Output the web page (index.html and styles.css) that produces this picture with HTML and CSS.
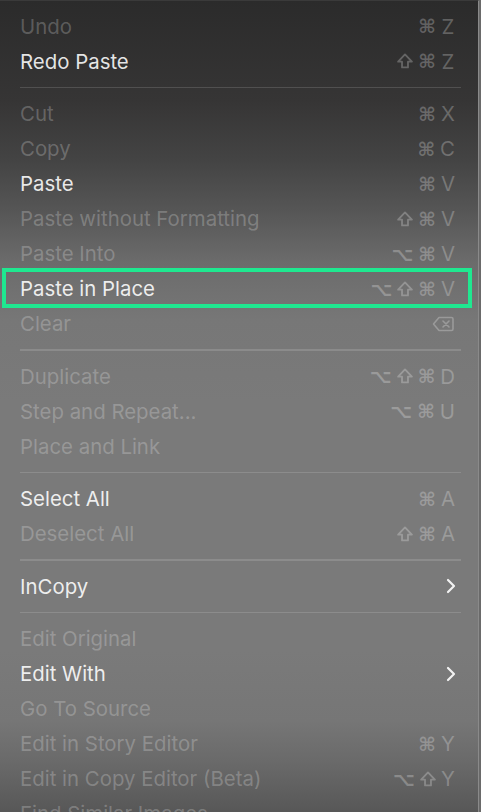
FILE: index.html
```html
<!DOCTYPE html>
<html>
<head>
<meta charset="utf-8">
<link rel="stylesheet" href="styles.css">
</head>
<body>
<div class="menu">
  <div class="item off"><span class="label">Undo</span><span class="keys"><i>⌘</i><b>Z</b></span></div>
  <div class="item"><span class="label">Redo Paste</span><span class="keys"><svg class="shift" viewBox="0 0 14 14"><path d="M7 1.2 L13 7.6 H9.6 V12.6 H4.4 V7.6 H1 Z" fill="none" stroke="currentColor" stroke-width="1.6" stroke-linejoin="round"/></svg><i>⌘</i><b>Z</b></span></div>
  <div class="sep"></div>
  <div class="item off"><span class="label">Cut</span><span class="keys"><i>⌘</i><b>X</b></span></div>
  <div class="item off"><span class="label">Copy</span><span class="keys"><i>⌘</i><b>C</b></span></div>
  <div class="item"><span class="label">Paste</span><span class="keys"><i>⌘</i><b>V</b></span></div>
  <div class="item off"><span class="label">Paste without Formatting</span><span class="keys"><svg class="shift" viewBox="0 0 14 14"><path d="M7 1.2 L13 7.6 H9.6 V12.6 H4.4 V7.6 H1 Z" fill="none" stroke="currentColor" stroke-width="1.6" stroke-linejoin="round"/></svg><i>⌘</i><b>V</b></span></div>
  <div class="item off"><span class="label">Paste Into</span><span class="keys"><i>⌥</i><i>⌘</i><b>V</b></span></div>
  <div class="item hl"><span class="label">Paste in Place</span><span class="keys"><i>⌥</i><svg class="shift" viewBox="0 0 14 14"><path d="M7 1.2 L13 7.6 H9.6 V12.6 H4.4 V7.6 H1 Z" fill="none" stroke="currentColor" stroke-width="1.6" stroke-linejoin="round"/></svg><i>⌘</i><b>V</b></span></div>
  <div class="item off"><span class="label">Clear</span>
    <svg class="del" width="22" height="16" viewBox="0 0 22 16"><path d="M7 1.5 H19.5 A1.5 1.5 0 0 1 21 3 V13 A1.5 1.5 0 0 1 19.5 14.5 H7 L1.5 8 Z" fill="none" stroke="currentColor" stroke-width="1.6" stroke-linejoin="round"/><path d="M11 5 L17 11 M17 5 L11 11" stroke="currentColor" stroke-width="1.6" stroke-linecap="round"/></svg>
  </div>
  <div class="sep"></div>
  <div class="item off"><span class="label">Duplicate</span><span class="keys"><i>⌥</i><svg class="shift" viewBox="0 0 14 14"><path d="M7 1.2 L13 7.6 H9.6 V12.6 H4.4 V7.6 H1 Z" fill="none" stroke="currentColor" stroke-width="1.6" stroke-linejoin="round"/></svg><i>⌘</i><b>D</b></span></div>
  <div class="item off"><span class="label">Step and Repeat...</span><span class="keys"><i>⌥</i><i>⌘</i><b>U</b></span></div>
  <div class="item off"><span class="label">Place and Link</span></div>
  <div class="sep"></div>
  <div class="item"><span class="label">Select All</span><span class="keys"><i>⌘</i><b>A</b></span></div>
  <div class="item off"><span class="label">Deselect All</span><span class="keys"><svg class="shift" viewBox="0 0 14 14"><path d="M7 1.2 L13 7.6 H9.6 V12.6 H4.4 V7.6 H1 Z" fill="none" stroke="currentColor" stroke-width="1.6" stroke-linejoin="round"/></svg><i>⌘</i><b>A</b></span></div>
  <div class="sep"></div>
  <div class="item"><span class="label">InCopy</span>
    <svg class="chev" width="10" height="16" viewBox="0 0 10 16"><path d="M2 2 L8 8 L2 14" fill="none" stroke="currentColor" stroke-width="2.2" stroke-linecap="round" stroke-linejoin="round"/></svg>
  </div>
  <div class="sep"></div>
  <div class="item off"><span class="label">Edit Original</span></div>
  <div class="item"><span class="label">Edit With</span>
    <svg class="chev" width="10" height="16" viewBox="0 0 10 16"><path d="M2 2 L8 8 L2 14" fill="none" stroke="currentColor" stroke-width="2.2" stroke-linecap="round" stroke-linejoin="round"/></svg>
  </div>
  <div class="item off"><span class="label">Go To Source</span></div>
  <div class="item off"><span class="label">Edit in Story Editor</span><span class="keys"><i>⌘</i><b>Y</b></span></div>
  <div class="item off"><span class="label">Edit in Copy Editor (Beta)</span><span class="keys"><i>⌥</i><svg class="shift" viewBox="0 0 14 14"><path d="M7 1.2 L13 7.6 H9.6 V12.6 H4.4 V7.6 H1 Z" fill="none" stroke="currentColor" stroke-width="1.6" stroke-linejoin="round"/></svg><b>Y</b></span></div>
  <div class="item off"><span class="label">Find Similar Images</span></div>
</div>
</body>
</html>
```
FILE: styles.css
```css
html, body {
  margin: 0;
  padding: 0;
  height: 812px;
  overflow: hidden;
  background: #6a6a6a;
}
.menu {
  box-sizing: border-box;
  width: 479px;
  height: 812px;
  padding-top: 7.5px;
  border-top: 1px solid #3a3a3a;
  border-right: 1px solid #8a8a8a;
  font-family: Inter, "Noto Sans", "DejaVu Sans", sans-serif;
  font-size: 20.4px;
  color: rgba(255, 255, 255, 0.88);
  background: linear-gradient(to bottom,
    #2b2b2b 0px,
    #363535 100px,
    #444 160px,
    #565656 210px,
    #6b6b6b 260px,
    #777 320px,
    #7a7a7a 400px,
    #7a7a7a 650px,
    #767676 720px,
    #6a6a6a 760px,
    #575757 812px);
}
.item {
  position: relative;
  height: 35px;
  display: flex;
  align-items: center;
  justify-content: space-between;
  padding: 0 23px 0 20px;
}
.item.off .label {
  color: rgba(255, 255, 255, 0.23);
}
.keys {
  display: flex;
  align-items: center;
  gap: 5px;
  color: rgba(255, 255, 255, 0.25);
}
.keys i {
  font-style: normal;
  font-family: "DejaVu Sans", sans-serif;
  font-size: 19px;
  font-weight: bold;
}
.keys b {
  font-weight: normal;
  font-size: 20.4px;
  min-width: 14px;
  text-align: center;
}
.shift {
  width: 16px;
  height: 16px;
}
.del {
  color: rgba(255, 255, 255, 0.26);
  margin-right: 1px;
}
.chev {
  color: rgba(255, 255, 255, 0.9);
  margin-right: -1px;
}
.sep {
  height: 17.5px;
  display: flex;
  align-items: center;
  padding: 0 17px 0 20px;
}
.sep::before {
  content: "";
  flex: 1;
  height: 1.5px;
  background: rgba(255, 255, 255, 0.14);
}
.hl::after {
  content: "";
  position: absolute;
  left: 2px;
  top: -3px;
  width: 470px;
  height: 40px;
  box-sizing: border-box;
  border: 4px solid #1fe890;
}
```
